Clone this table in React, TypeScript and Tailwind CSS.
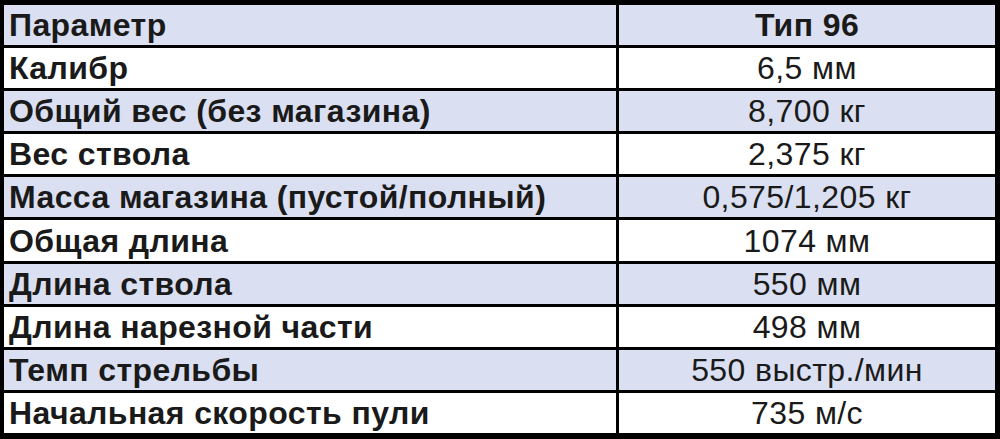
import React from 'react'

const rows: [string, string][] = [
    ['Параметр', 'Тип 96'],
    ['Калибр', '6,5 мм'],
    ['Общий вес (без магазина)', '8,700 кг'],
    ['Вес ствола', '2,375 кг'],
    ['Масса магазина (пустой/полный)', '0,575/1,205 кг'],
    ['Общая длина', '1074 мм'],
    ['Длина ствола', '550 мм'],
    ['Длина нарезной части', '498 мм'],
    ['Темп стрельбы', '550 выстр./мин'],
    ['Начальная скорость пули', '735 м/с'],
]

export default function App() {
    return (
        <div className="w-[1000px] h-[439px] bg-black pt-[5px] pb-[6px] pl-[4px] pr-[5px] grid grid-cols-[612px_376px] grid-rows-10 gap-x-[3px] gap-y-[3px] font-['Liberation_Sans',Arial,sans-serif] text-[#1a1a1a] text-[32px] tracking-[0.4px] leading-none">
            {rows.map(([name, value], i) => {
                const bg = i % 2 === 0 ? 'bg-[#dae0f1]' : 'bg-white'
                return (
                    <React.Fragment key={name}>
                        <div className={`${bg} flex items-center pl-[5px] font-bold`}>{name}</div>
                        <div className={`${bg} flex items-center justify-center ${i === 0 ? 'font-bold' : ''}`}>
                            {value}
                        </div>
                    </React.Fragment>
                )
            })}
        </div>
    )
}
